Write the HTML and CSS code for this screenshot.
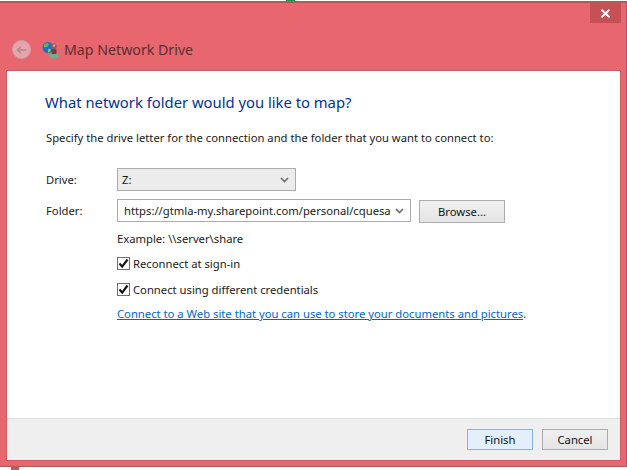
FILE: index.html
```html
<!DOCTYPE html>
<html lang="en">
<head>
<meta charset="utf-8">
<title>Map Network Drive</title>
<link rel="stylesheet" href="styles.css">
</head>
<body>
<div class="strip"><span class="strip-green"></span></div>
<div class="window">
  <div class="captionbar">
    <div class="close"><svg width="11" height="9" viewBox="0 0 11 9"><path d="M1.5 0.8 L9.5 8.2 M9.5 0.8 L1.5 8.2" stroke="#fff" stroke-width="2" fill="none"/></svg></div>
  </div>
  <div class="navbar">
    <div class="back"><svg width="16" height="12" viewBox="0 0 16 12"><path d="M14 6 H3 M7 2 L3 6 L7 10" stroke="#a98a90" stroke-width="1.6" fill="none"/></svg></div>
    <svg class="appicon" width="18" height="18" viewBox="0 0 18 18">
      <ellipse cx="12" cy="14.8" rx="5" ry="2.8" fill="#6fae8a"/>
      <circle cx="6" cy="6.5" r="5.5" fill="#1f6fc4"/>
      <path d="M2.5 3 Q5.5 1 6.5 3 Q7.5 5 4.5 6 Q2.5 7 1.5 5 Z" fill="#5cb85c"/>
      <path d="M6 8 Q9 7 9 9 Q8 11.5 6 11.5 Z" fill="#7cc36a"/>
      <circle cx="12" cy="5.2" r="2.7" fill="#a8524a"/>
      <circle cx="12" cy="4.6" r="1.3" fill="#d9a08e"/>
      <rect x="9.5" y="8" width="5" height="5" rx="1" fill="#7d3a44"/>
    </svg>
    <span class="title">Map Network Drive</span>
  </div>
  <div class="panel">
    <main class="content">
      <h1 class="heading">What network folder would you like to map?</h1>
      <p class="intro">Specify the drive letter for the connection and the folder that you want to connect to:</p>
      <div class="form">
        <div class="row row-drive">
          <span class="label">Drive:</span>
          <div class="select select-drive"><span class="select-text">Z:</span><svg class="chev" width="9" height="6" viewBox="0 0 9 6"><path d="M1 1 L4.5 4.5 L8 1" stroke="#6d6d6d" stroke-width="1.7" fill="none"/></svg></div>
        </div>
        <div class="row row-folder">
          <span class="label">Folder:</span>
          <div class="select select-folder"><span class="select-text url">https://gtmla-my.sharepoint.com/personal/cquesada</span><svg class="chev" width="9" height="6" viewBox="0 0 9 6"><path d="M1 1 L4.5 4.5 L8 1" stroke="#6d6d6d" stroke-width="1.7" fill="none"/></svg></div>
          <div class="btn btn-browse">Browse...</div>
        </div>
        <div class="options">
          <div class="example">Example: \\server\share</div>
          <div class="check check-first"><span class="box"><svg width="11" height="11" viewBox="0 0 11 11"><path d="M1.5 5.5 L4.2 8.6 L9.5 1.5" stroke="#111" stroke-width="2.1" fill="none"/></svg></span>Reconnect at sign-in</div>
          <div class="check check-second"><span class="box"><svg width="11" height="11" viewBox="0 0 11 11"><path d="M1.5 5.5 L4.2 8.6 L9.5 1.5" stroke="#111" stroke-width="2.1" fill="none"/></svg></span>Connect using different credentials</div>
          <div class="linkline"><a class="link">Connect to a Web site that you can use to store your documents and pictures</a>.</div>
        </div>
      </div>
    </main>
    <footer class="footer">
      <div class="btn btn-finish">Finish</div>
      <div class="btn btn-cancel">Cancel</div>
    </footer>
  </div>
</div>
<div class="under"><span class="under-tab"></span></div>
</body>
</html>
```
FILE: styles.css
```css
* { box-sizing: border-box; }
html, body { margin: 0; padding: 0; }
body {
  width: 627px;
  height: 470px;
  overflow: hidden;
  background: #fff;
  font-family: "Noto Sans", "Open Sans", sans-serif;
  font-size: 11.25px;
  color: #1a1a1a;
  display: flex;
  flex-direction: column;
}
.strip { height: 1px; display: flex; padding-left: 286px; background: #fff; }
.strip-green { width: 9px; height: 1px; background: #1f9a4a; }
.window {
  height: 466px;
  flex: none;
  background: #e8666e;
  border: 1px solid #b5565c;
  border-left: 0;
  padding: 0 6px 6px 7px;
  display: flex;
  flex-direction: column;
  box-shadow: inset 0 1px 0 #b5565c;
}
.captionbar { height: 21px; display: flex; justify-content: flex-end; margin-right: -1px; padding-top: 1px; flex: none; }
.close {
  width: 31px;
  height: 20px;
  background: #c75054;
  display: flex;
  align-items: center;
  justify-content: center;
}
.navbar { height: 48px; flex: none; display: flex; align-items: center; padding-left: 5px; padding-top: 5px; }
.back {
  width: 19px;
  height: 19px;
  border-radius: 50%;
  border: 1px solid #c9a3aa;
  background: #e9a3ab;
  display: flex;
  align-items: center;
  justify-content: center;
}
.back svg { width: 13px; height: 10px; }
.appicon { margin-left: 11px; }
.title { margin-left: 4px; font-size: 14.2px; line-height: 18px; color: #5b2e30; }
.panel {
  flex: 1;
  background: #fff;
  display: flex;
  flex-direction: column;
  box-shadow: 0 0 0 1px #cf5a62;
}
.content { flex: 1; padding: 0 0 0 39px; }
.heading { margin: 21px 0 0 -1px; font-size: 14.8px; line-height: 20px; font-weight: 400; color: #003399; }
.intro { margin: 18px 0 0; line-height: 16px; }
.form { margin-top: 22px; }
.row { display: flex; align-items: center; }
.label { width: 71px; }
.select {
  height: 23px;
  border: 1px solid #ababab;
  display: flex;
  align-items: center;
  justify-content: space-between;
  padding: 0 6px 0 4px;
}
.select-drive { width: 179px; background: #ececec; }
.select-folder { width: 294px; background: #fff; padding-left: 6px; }
.select-text { white-space: nowrap; overflow: hidden; }
.url { width: 267px; }
.row-drive { height: 23px; }
.row-folder { height: 25px; margin-top: 7px; }
.btn {
  height: 23px;
  border: 1px solid #adadad;
  background: linear-gradient(#f0f0f0, #e5e5e5);
  display: flex;
  align-items: center;
  justify-content: center;
  color: #111;
}
.btn-browse { width: 86px; margin-left: 8px; margin-top: 2px; }
.options { margin-left: 71px; }
.example { margin-top: 8px; line-height: 16px; }
.check { display: flex; align-items: center; height: 16px; }
.check-first { margin-top: 8px; }
.check-second { margin-top: 10px; }
.box {
  width: 13px;
  height: 13px;
  border: 1px solid #707070;
  background: #fff;
  margin-right: 3px;
  display: flex;
  align-items: center;
  justify-content: center;
}
.linkline { margin-top: 9px; line-height: 16px; white-space: nowrap; }
.link { color: #0066cc; text-decoration: underline; }
.footer {
  height: 42px;
  flex: none;
  background: #efefef;
  border-top: 1px solid #dfdfdf;
  display: flex;
  justify-content: flex-end;
  padding: 10px 12px 0 0;
  gap: 9px;
}
.footer .btn { width: 66px; height: 21px; }
.btn-finish { background: #e3f0fb; border-color: #7eb4ea; }
.under { flex: 1; display: flex; padding-left: 11px; }
.under-tab { width: 8px; background: #c2575d; }
```
